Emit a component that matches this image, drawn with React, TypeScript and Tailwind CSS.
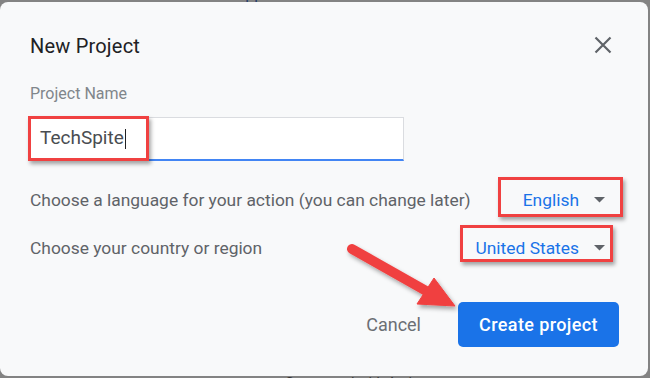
import React from "react";

function Caret() {
  return (
    <svg width="11" height="6" viewBox="0 0 11 6" className="ml-[15px] shrink-0">
      <path d="M0 0 L11 0 L5.5 5.5 Z" fill="#5f6368" />
    </svg>
  );
}

export default function App() {
  return (
    <div className="relative w-[650px] h-[378px] bg-[#838383] overflow-hidden font-['Roboto',sans-serif]">
      {/* clipped page text above the dialog */}
      <div className="h-[2px] overflow-hidden">
        <div className="flex items-end gap-[28px] -mt-[14px] -ml-[8px] text-[16px] leading-[16px] text-[#243c6b]">
          <span>code</span>
          <span className="flex items-center gap-[10px]">
            <span className="inline-block w-[14px] h-[12px] bg-[#243c6b]" />
            API reference
          </span>
          <span className="flex items-center gap-[10px]">
            <span className="inline-block w-[14px] h-[12px] bg-[#243c6b]" />
            Support
          </span>
        </div>
      </div>

      {/* dialog */}
      <div className="relative w-[648px] h-[374px] rounded-[8px] bg-[#f8f9fa] flex flex-col pl-[30px] pr-[29px] pt-[32px]">
        <div className="flex items-center justify-between h-[24px]">
          <h1 className="text-[20px] leading-[24px] text-[#202124] font-normal tracking-[0.2px]">New Project</h1>
          <svg width="18" height="18" viewBox="0 0 18 18" className="mr-[7px] -mt-[2px]">
            <path d="M1.5 1.5 L16.5 16.5 M16.5 1.5 L1.5 16.5" stroke="#5f6368" strokeWidth="2.2" />
          </svg>
        </div>

        <label className="mt-[26px] text-[16px] leading-[20px] text-[#80868b]">Project Name</label>

        <div className="mt-[13px] -ml-[2px] w-[376px] h-[44px] bg-white border border-[#dadce0] border-b-2 border-b-[#4285f4] flex items-center pl-[11px]">
          <span className="text-[19px] text-[#4a4d51]">TechSpite</span>
          <span className="inline-block w-[1px] h-[20px] bg-[#202124] ml-[1px]" />
        </div>

        <div className="mt-[15px] h-[48px] flex items-center justify-between">
          <span className="text-[17.4px] leading-[20px] text-[#5f6368]">
            Choose a language for your action (you can change later)
          </span>
          <div className="flex items-center pr-[14px]">
            <span className="text-[17.4px] leading-[20px] text-[#1a73e8]">English</span>
            <Caret />
          </div>
        </div>

        <div className="h-[48px] flex items-center justify-between">
          <span className="text-[17.4px] leading-[20px] text-[#5f6368]">Choose your country or region</span>
          <div className="flex items-center pr-[14px]">
            <span className="text-[17.4px] leading-[20px] text-[#1a73e8]">United States</span>
            <Caret />
          </div>
        </div>

        <div className="mt-[30px] flex items-center justify-end">
          <button className="text-[18px] font-normal text-[#6b6f74] mr-[37px]">Cancel</button>
          <button className="w-[161px] h-[45px] rounded-[5px] bg-[#1a73e8] text-white text-[18px] font-medium tracking-[0.4px]">
            Create project
          </button>
        </div>

        {/* annotation boxes */}
        <div className="absolute left-[28px] top-[114px] w-[121px] h-[45px] border-[3px] border-[#f04141] shadow-[2px_3px_4px_rgba(0,0,0,0.35)]" />
        <div className="absolute left-[498px] top-[175px] w-[125px] h-[40px] border-[3px] border-[#f04141] shadow-[2px_3px_4px_rgba(0,0,0,0.35)]" />
        <div className="absolute left-[460px] top-[223px] w-[153px] h-[37px] border-[3px] border-[#f04141] shadow-[2px_3px_4px_rgba(0,0,0,0.35)]" />

        {/* annotation arrow */}
        <svg className="absolute left-0 top-0" width="648" height="374" viewBox="0 -2 648 374" style={{ pointerEvents: "none" }}>
          <defs>
            <filter id="sh" x="-20%" y="-20%" width="140%" height="140%">
              <feDropShadow dx="2" dy="3" stdDeviation="2" floodColor="#000" floodOpacity="0.35" />
            </filter>
          </defs>
          <g filter="url(#sh)" fill="#f04141" stroke="#f04141">
            <line x1="352" y1="245" x2="428" y2="288" strokeWidth="10" strokeLinecap="round" />
            <path d="M455 302 L417 300 L434 274 Z" strokeWidth="1" strokeLinejoin="round" />
          </g>
        </svg>
      </div>

      <div className="h-[2px] overflow-hidden pl-[285px]">
        <div className="text-[14px] leading-[14px] text-[#333]">Get started with Actions</div>
      </div>
    </div>
  );
}
